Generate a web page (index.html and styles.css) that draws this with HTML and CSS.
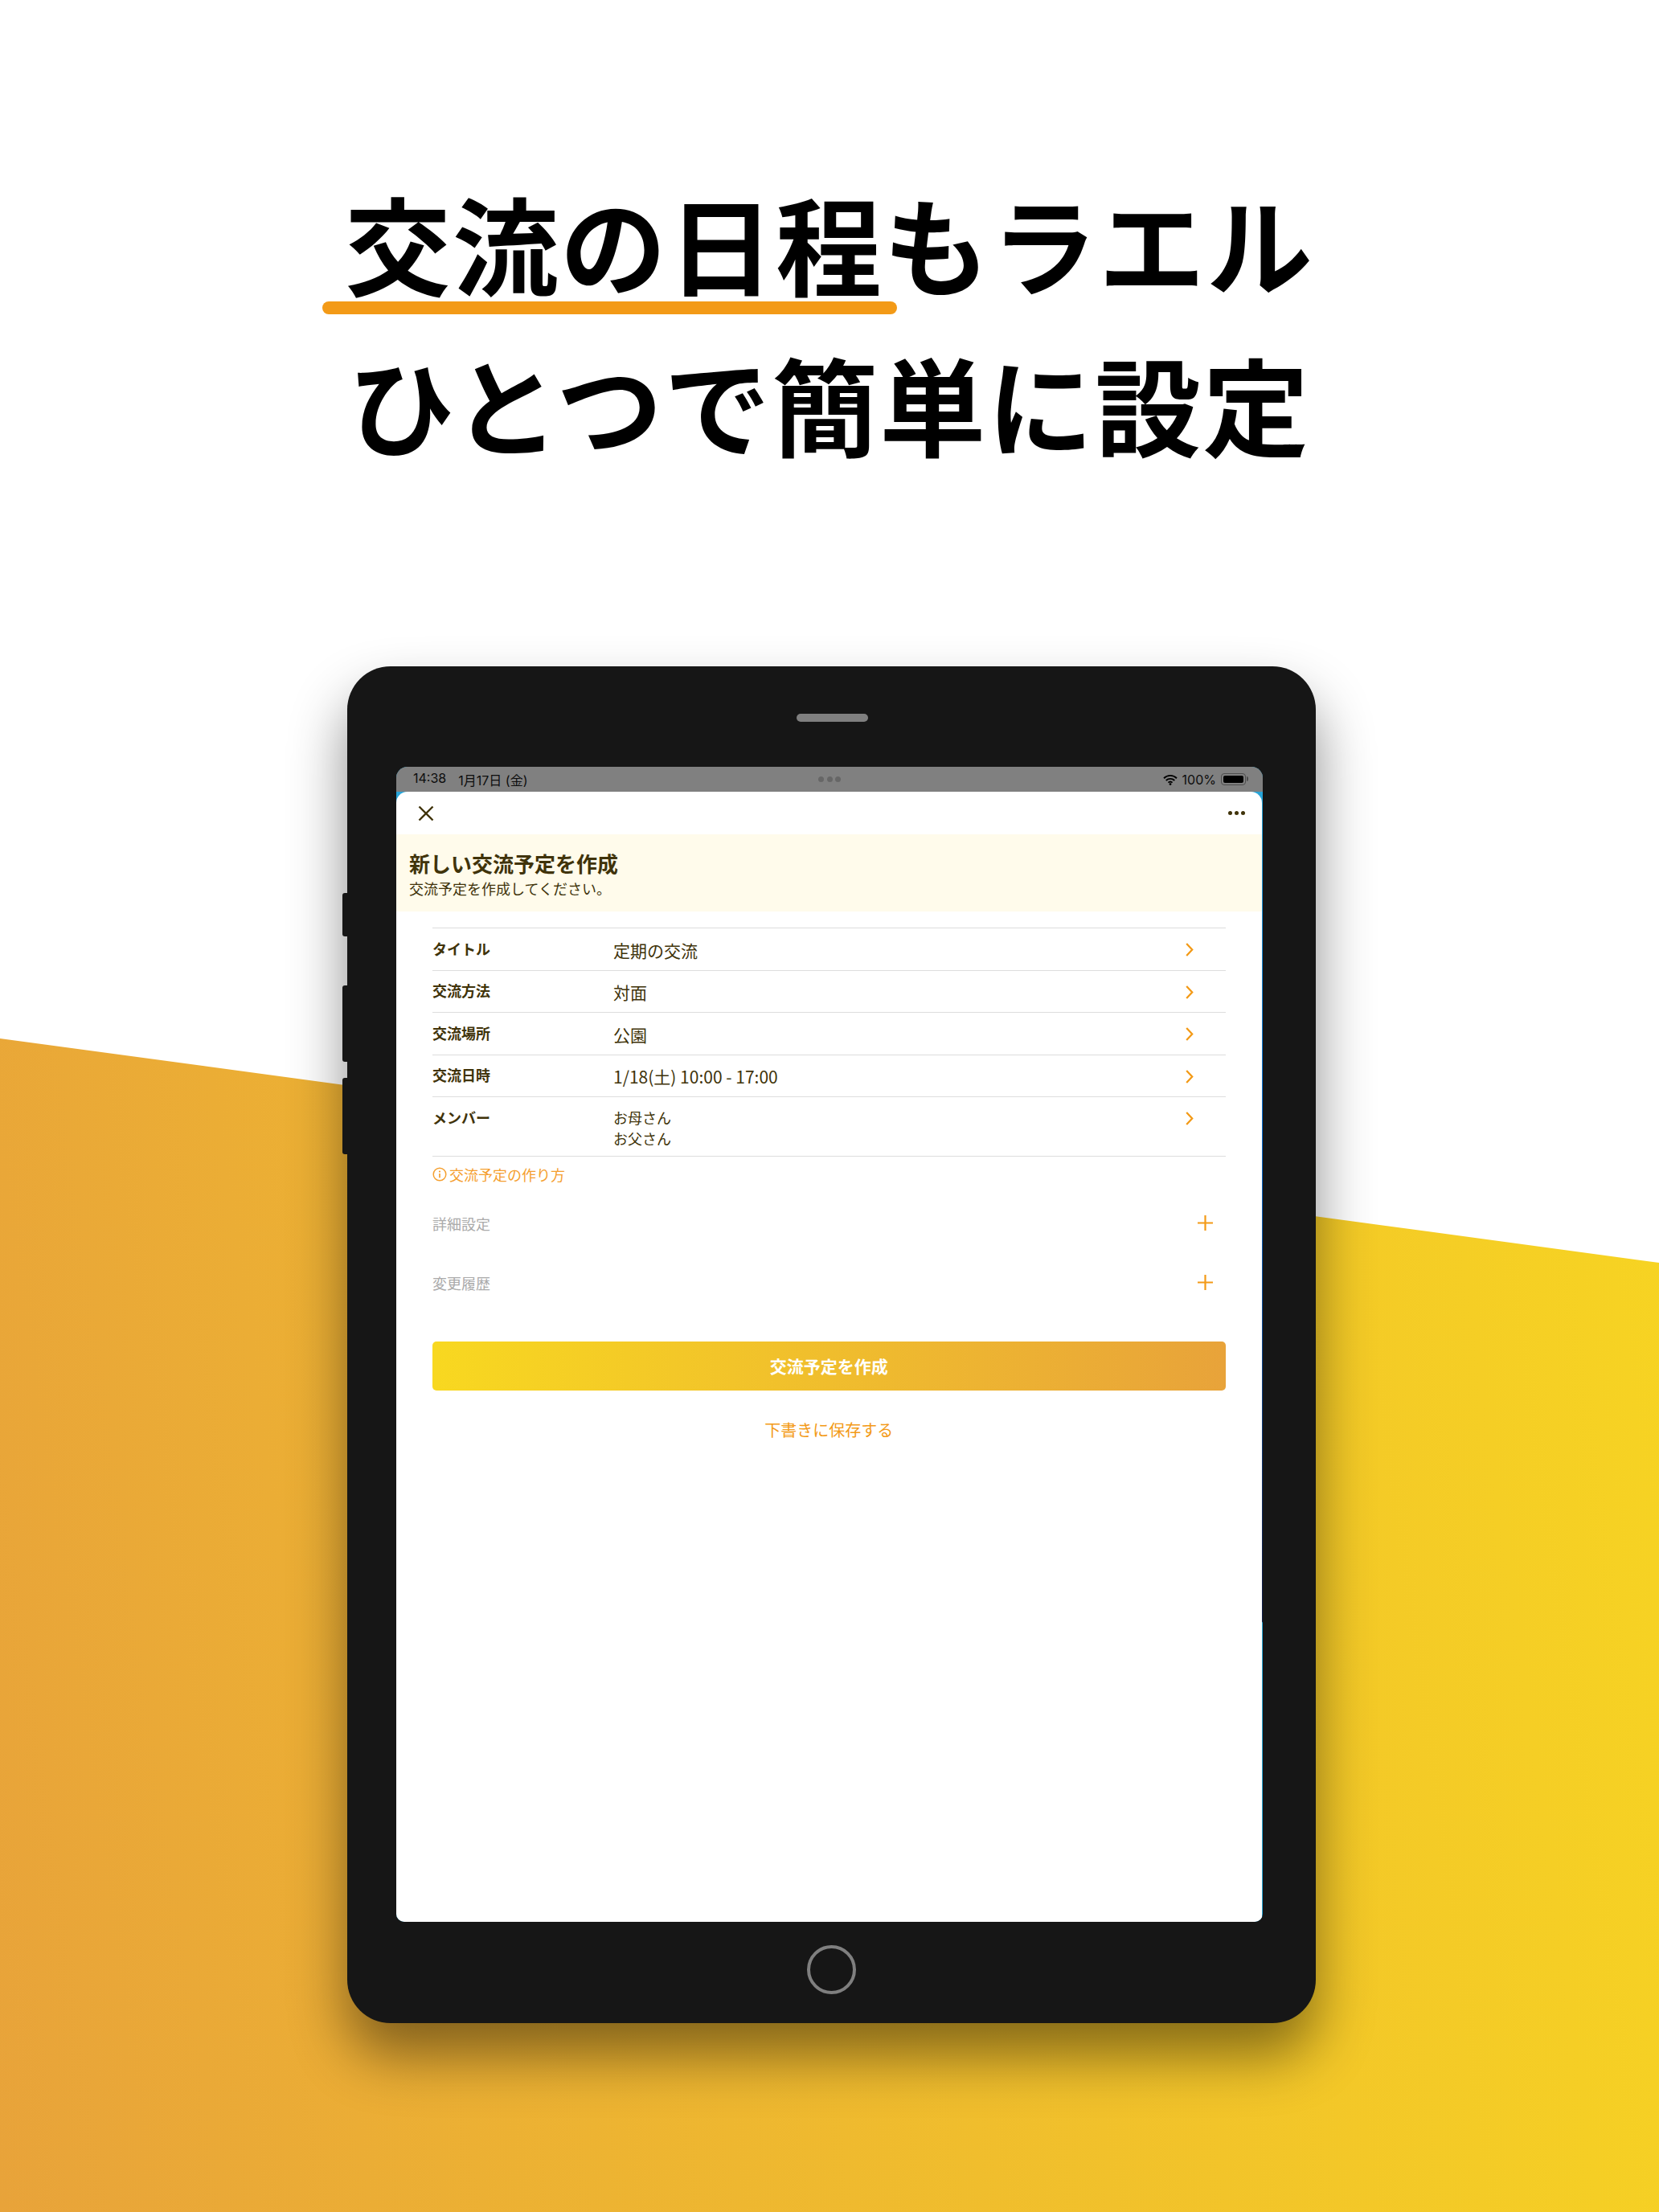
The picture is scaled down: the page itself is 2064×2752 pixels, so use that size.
FILE: index.html
```html
<!DOCTYPE html>
<html lang="ja">
<head>
<meta charset="utf-8">
<title>交流の日程もラエルひとつで簡単に設定</title>
<link rel="stylesheet" href="styles.css">
</head>
<body>
<div class="page">
  <h1 class="headline"><span class="mark">交流の日程</span>もラエル<br>ひとつで簡単に設定</h1>
  <div class="tablet">
    <span class="side-btn side-1"></span>
    <span class="side-btn side-2"></span>
    <span class="side-btn side-3"></span>
    <div class="speaker"></div>
    <div class="screen">
      <div class="status">
        <div class="status-left"><span>14:38</span><span>1月17日 (金)</span></div>
        <div class="status-dots"><i></i><i></i><i></i></div>
        <div class="status-right">
          <svg class="wifi" viewBox="0 0 18 14" width="18" height="14"><path d="M1 5.2a11.4 11.4 0 0 1 16 0M3.7 8a7.6 7.6 0 0 1 10.6 0M6.4 10.6a3.8 3.8 0 0 1 5.2 0" fill="none" stroke="#000" stroke-width="1.9"/><circle cx="9" cy="12.6" r="1.4" fill="#000"/></svg>
          <span>100%</span>
          <span class="battery"><span class="battery-fill"></span></span>
        </div>
      </div>
      <div class="sheet">
        <div class="topbar">
          <svg class="close" viewBox="0 0 20 20" width="20" height="20"><path d="M1.5 1.5l17 17M18.5 1.5l-17 17" fill="none" stroke="#40330a" stroke-width="2.4"/></svg>
          <div class="more"><i></i><i></i><i></i></div>
        </div>
        <div class="intro">
          <div class="intro-title">新しい交流予定を作成</div>
          <div class="intro-sub">交流予定を作成してください。</div>
        </div>
        <div class="content">
          <div class="rows">
            <div class="row"><div class="label">タイトル</div><div class="value">定期の交流</div><svg class="chev" viewBox="0 0 10 17" width="10" height="17"><path d="M1.2 1l7 7.5-7 7.5" fill="none" stroke="#f39a17" stroke-width="2.3"/></svg></div>
            <div class="row"><div class="label">交流方法</div><div class="value">対面</div><svg class="chev" viewBox="0 0 10 17" width="10" height="17"><path d="M1.2 1l7 7.5-7 7.5" fill="none" stroke="#f39a17" stroke-width="2.3"/></svg></div>
            <div class="row"><div class="label">交流場所</div><div class="value">公園</div><svg class="chev" viewBox="0 0 10 17" width="10" height="17"><path d="M1.2 1l7 7.5-7 7.5" fill="none" stroke="#f39a17" stroke-width="2.3"/></svg></div>
            <div class="row"><div class="label">交流日時</div><div class="value">1/18(土) 10:00 - 17:00</div><svg class="chev" viewBox="0 0 10 17" width="10" height="17"><path d="M1.2 1l7 7.5-7 7.5" fill="none" stroke="#f39a17" stroke-width="2.3"/></svg></div>
            <div class="row row-members"><div class="label">メンバー</div><div class="value members"><div>お母さん</div><div>お父さん</div></div><svg class="chev" viewBox="0 0 10 17" width="10" height="17"><path d="M1.2 1l7 7.5-7 7.5" fill="none" stroke="#f39a17" stroke-width="2.3"/></svg></div>
          </div>
          <div class="howto">
            <svg class="info" viewBox="0 0 18 18" width="18" height="18"><circle cx="9" cy="9" r="7.8" fill="none" stroke="#f5a030" stroke-width="1.5"/><circle cx="9" cy="5.6" r="1.1" fill="#f5a030"/><path d="M9 8v5.2" stroke="#f5a030" stroke-width="1.7"/></svg>
            <span>交流予定の作り方</span>
          </div>
          <div class="fold"><span>詳細設定</span><svg class="plus" viewBox="0 0 19 19" width="19" height="19"><path d="M9.5 0v19M0 9.500h19" stroke="#f39a17" stroke-width="2.2"/></svg></div>
          <div class="fold"><span>変更履歴</span><svg class="plus" viewBox="0 0 19 19" width="19" height="19"><path d="M9.5 0v19M0 9.500h19" stroke="#f39a17" stroke-width="2.2"/></svg></div>
          <div class="primary">交流予定を作成</div>
          <div class="draft">下書きに保存する</div>
        </div>
      </div>
    </div>
    <div class="home"></div>
  </div>
</div>
</body>
</html>
```
FILE: styles.css
```css
* { box-sizing: border-box; }
html, body { margin: 0; padding: 0; }
body {
  background: #fff;
  font-family: "Noto Sans CJK JP", "Noto Sans", sans-serif;
  color: #40330a;
}
.page {
  position: relative;
  width: 2064px;
  height: 2752px;
  overflow: hidden;
  background: #fff;
}
.page::before {
  content: "";
  position: absolute;
  inset: 0;
  background: linear-gradient(82deg, #e8a33a 0%, #f8d820 100%);
  clip-path: polygon(0 1292px, 100% 1571px, 100% 100%, 0 100%);
}
.headline {
  position: relative;
  margin: 0;
  padding-top: 201px;
  font-size: 132px;
  line-height: 200px;
  font-weight: 700;
  letter-spacing: 2px;
  text-align: center;
  color: #000;
}
.mark { position: relative; }
.mark::after {
  content: "";
  position: absolute;
  left: -28px;
  top: 170px;
  width: 715px;
  height: 16px;
  border-radius: 8px;
  background: #f39a17;
}
.tablet {
  position: relative;
  width: 1205px;
  height: 1688px;
  margin: 228px 0 0 432px;
  padding: 125px 66px 0 61px;
  border-radius: 54px;
  background: #161616;
  box-shadow: 0 40px 70px rgba(0, 0, 0, .45);
}
.side-btn {
  position: absolute;
  left: -6px;
  width: 8px;
  border-radius: 3px 0 0 3px;
  background: #161616;
}
.side-1 { top: 282px; height: 54px; }
.side-2 { top: 397px; height: 95px; }
.side-3 { top: 512px; height: 95px; }
.speaker {
  position: absolute;
  left: 559px;
  top: 59px;
  width: 89px;
  height: 10px;
  border-radius: 5px;
  background: #7f7f7f;
}
.home {
  position: absolute;
  left: 572px;
  top: 1591px;
  width: 61px;
  height: 61px;
  border: 4px solid #7f7f7f;
  border-radius: 50%;
}
.screen {
  display: flex;
  flex-direction: column;
  height: 1437px;
  overflow: hidden;
  border-radius: 14px 14px 10px 10px;
  background: linear-gradient(180deg, #2aa8d8 0%, #0a72d8 30%, #10204a 70%, #10204a 74%, #2aa8d8 74.1%, #2aa8d8 100%);
}
.status {
  display: flex;
  align-items: center;
  justify-content: space-between;
  position: relative;
  flex: none;
  height: 31px;
  padding: 0 21px 0 21px;
  background: #808080;
  font-family: "Inter", "Noto Sans CJK JP", sans-serif;
  font-size: 16px;
  color: #0d0d0d;
}
.status-left { display: flex; gap: 15px; }
.status-dots {
  position: absolute;
  left: 525px;
  top: 12px;
  display: flex;
  gap: 3.500px;
}
.status-dots i {
  width: 7px;
  height: 7px;
  border-radius: 50%;
  background: #666;
}
.status-right { display: flex; align-items: center; gap: 6px; }
.battery {
  position: relative;
  display: block;
  width: 31px;
  height: 15px;
  padding: 2px;
  border: 1.500px solid #4d4d4d;
  border-radius: 4px;
}
.battery::after {
  content: "";
  position: absolute;
  right: -4px;
  top: 3px;
  width: 2px;
  height: 6px;
  border-radius: 0 2px 2px 0;
  background: #4d4d4d;
}
.battery-fill {
  display: block;
  height: 100%;
  border-radius: 2px;
  background: #000;
}
.sheet {
  flex: 1;
  margin-right: 1.500px;
  border-radius: 14px 14px 0 0;
  background: #fff;
}
.topbar {
  display: flex;
  align-items: center;
  justify-content: space-between;
  height: 53px;
  padding: 0 21px 0 27px;
}
.more { display: flex; gap: 3px; }
.more i {
  width: 5px;
  height: 5px;
  border-radius: 50%;
  background: #40330a;
}
.intro {
  height: 96px;
  padding: 18px 0 0 16px;
  background: #fffbeb;
}
.intro-title { font-size: 26px; line-height: 36px; font-weight: 700; }
.intro-sub { font-size: 18px; line-height: 26px; }
.content { padding: 20px 45px 0; }
.rows { border-bottom: 1.500px solid #ddd; }
.row {
  display: grid;
  grid-template-columns: 225px 1fr 10px;
  padding: 11.500px 40px 10px 0;
  border-top: 1.500px solid #ddd;
}
.row-members { padding-bottom: 8px; }
.label { font-size: 18px; line-height: 26px; font-weight: 700; }
.value { font-size: 21px; line-height: 30px; }
.members { font-size: 18px; line-height: 26.500px; }
.chev { margin-top: 6.500px; }
.howto {
  display: flex;
  align-items: center;
  gap: 3px;
  margin-top: 9px;
  font-size: 18px;
  line-height: 26px;
  color: #f5a030;
}
.fold {
  display: flex;
  align-items: center;
  justify-content: space-between;
  height: 74px;
  padding-right: 16px;
  font-size: 18px;
  color: #aaa;
}
.fold:first-of-type { margin-top: 11px; }
.howto + .fold { margin-top: 11px; }
.primary {
  display: flex;
  align-items: center;
  justify-content: center;
  height: 61px;
  margin-top: 36px;
  border-radius: 5px;
  background: linear-gradient(90deg, #f8d820 0%, #e8a33a 100%);
  font-size: 21px;
  font-weight: 700;
  color: #fff;
}
.draft {
  margin-top: 34px;
  font-size: 20px;
  line-height: 30px;
  text-align: center;
  color: #f39a17;
}
```
